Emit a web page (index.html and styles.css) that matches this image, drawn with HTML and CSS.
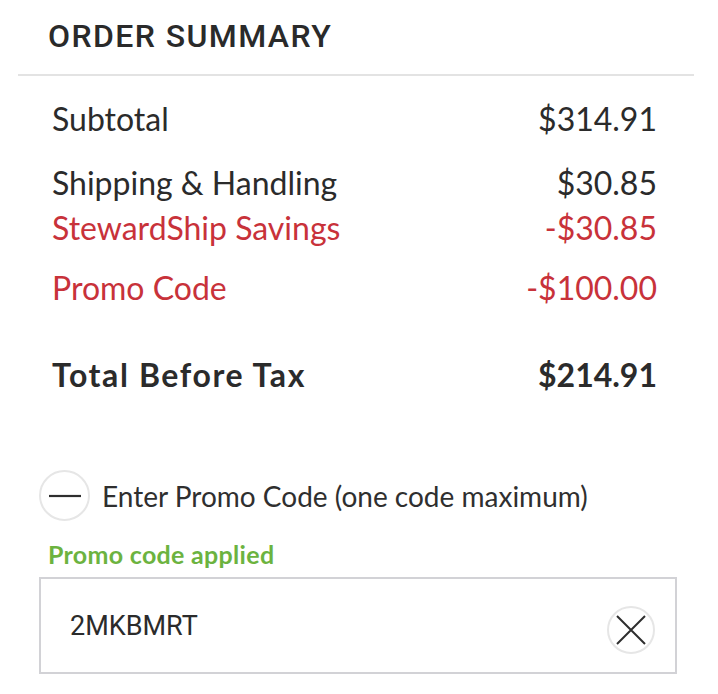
FILE: index.html
```html
<!DOCTYPE html>
<html lang="en">
<head>
<meta charset="utf-8">
<title>Order Summary</title>
<link rel="stylesheet" href="styles.css">
</head>
<body>
<section class="summary">
  <h2 class="title">ORDER SUMMARY</h2>
  <div class="rows">
    <div class="row row-subtotal"><span>Subtotal</span><span>$314.91</span></div>
    <div class="row row-shipping"><span>Shipping &amp; Handling</span><span>$30.85</span></div>
    <div class="row red"><span>StewardShip Savings</span><span>-$30.85</span></div>
    <div class="row red row-promo"><span>Promo Code</span><span>-$100.00</span></div>
    <div class="row total"><span class="total-label">Total Before Tax</span><span>$214.91</span></div>
  </div>
  <div class="promo">
    <div class="toggle">
      <span class="circle minus"><svg width="32" height="4" viewBox="0 0 32 4"><line x1="0" y1="2" x2="32" y2="2" stroke="#2e2e2e" stroke-width="2.2"/></svg></span>
      <span class="toggle-label">Enter Promo Code (one code maximum)</span>
    </div>
    <div class="applied">Promo code applied</div>
    <div class="field">
      <span class="code">2MKBMRT</span>
      <span class="circle clear"><svg width="30" height="30" viewBox="0 0 30 30"><path d="M1 1 L29 29 M29 1 L1 29" stroke="#2e2e2e" stroke-width="2" fill="none"/></svg></span>
    </div>
  </div>
</section>
</body>
</html>
```
FILE: styles.css
```css
* { box-sizing: border-box; }
body {
  margin: 0;
  background: #fff;
  font-family: Lato, "Open Sans", sans-serif;
  color: #2b2b2b;
}
.summary {
  margin-left: 18px;
  width: 676px;
}
.title {
  margin: 0;
  padding: 19px 0 21px 30px;
  font-family: Roboto, "Liberation Sans", sans-serif;
  font-weight: 500;
  font-size: 32px;
  line-height: 34px;
  letter-spacing: 1.4px;
  color: #2a2a2a;
  border-bottom: 2px solid #e3e3e3;
}
.rows {
  padding: 20px 37px 0 34px;
}
.row {
  display: flex;
  justify-content: space-between;
  font-size: 32px;
  line-height: 45px;
}
.row-shipping { margin-top: 19px; }
.row-promo { margin-top: 15px; }
.red { color: #c8323a; }
.total {
  margin-top: 42px;
  font-weight: 700;
}
.total-label { letter-spacing: 1.6px; }
.promo {
  padding-left: 21px;
  margin-top: 73px;
}
.toggle {
  display: flex;
  align-items: center;
  gap: 12px;
}
.circle {
  display: flex;
  align-items: center;
  justify-content: center;
  border: 2px solid #e6e6e6;
  border-radius: 50%;
  flex: none;
}
.minus {
  width: 51px;
  height: 51px;
}
.toggle-label {
  font-size: 28px;
  color: #2f2f2f;
}
.applied {
  margin-top: 18px;
  padding-left: 9px;
  font-size: 25px;
  line-height: 30px;
  letter-spacing: 0.3px;
  font-weight: 700;
  color: #6cb33f;
}
.field {
  margin-top: 8px;
  width: 638px;
  height: 97px;
  border: 2px solid #d2d2d6;
  display: flex;
  align-items: center;
  justify-content: space-between;
  padding: 0 20px 0 29px;
}
.code {
  font-family: Roboto, "Liberation Sans", sans-serif;
  font-size: 27px;
  color: #2b2b2b;
}
.clear {
  width: 48px;
  height: 48px;
  margin-top: 8px;
}
```
